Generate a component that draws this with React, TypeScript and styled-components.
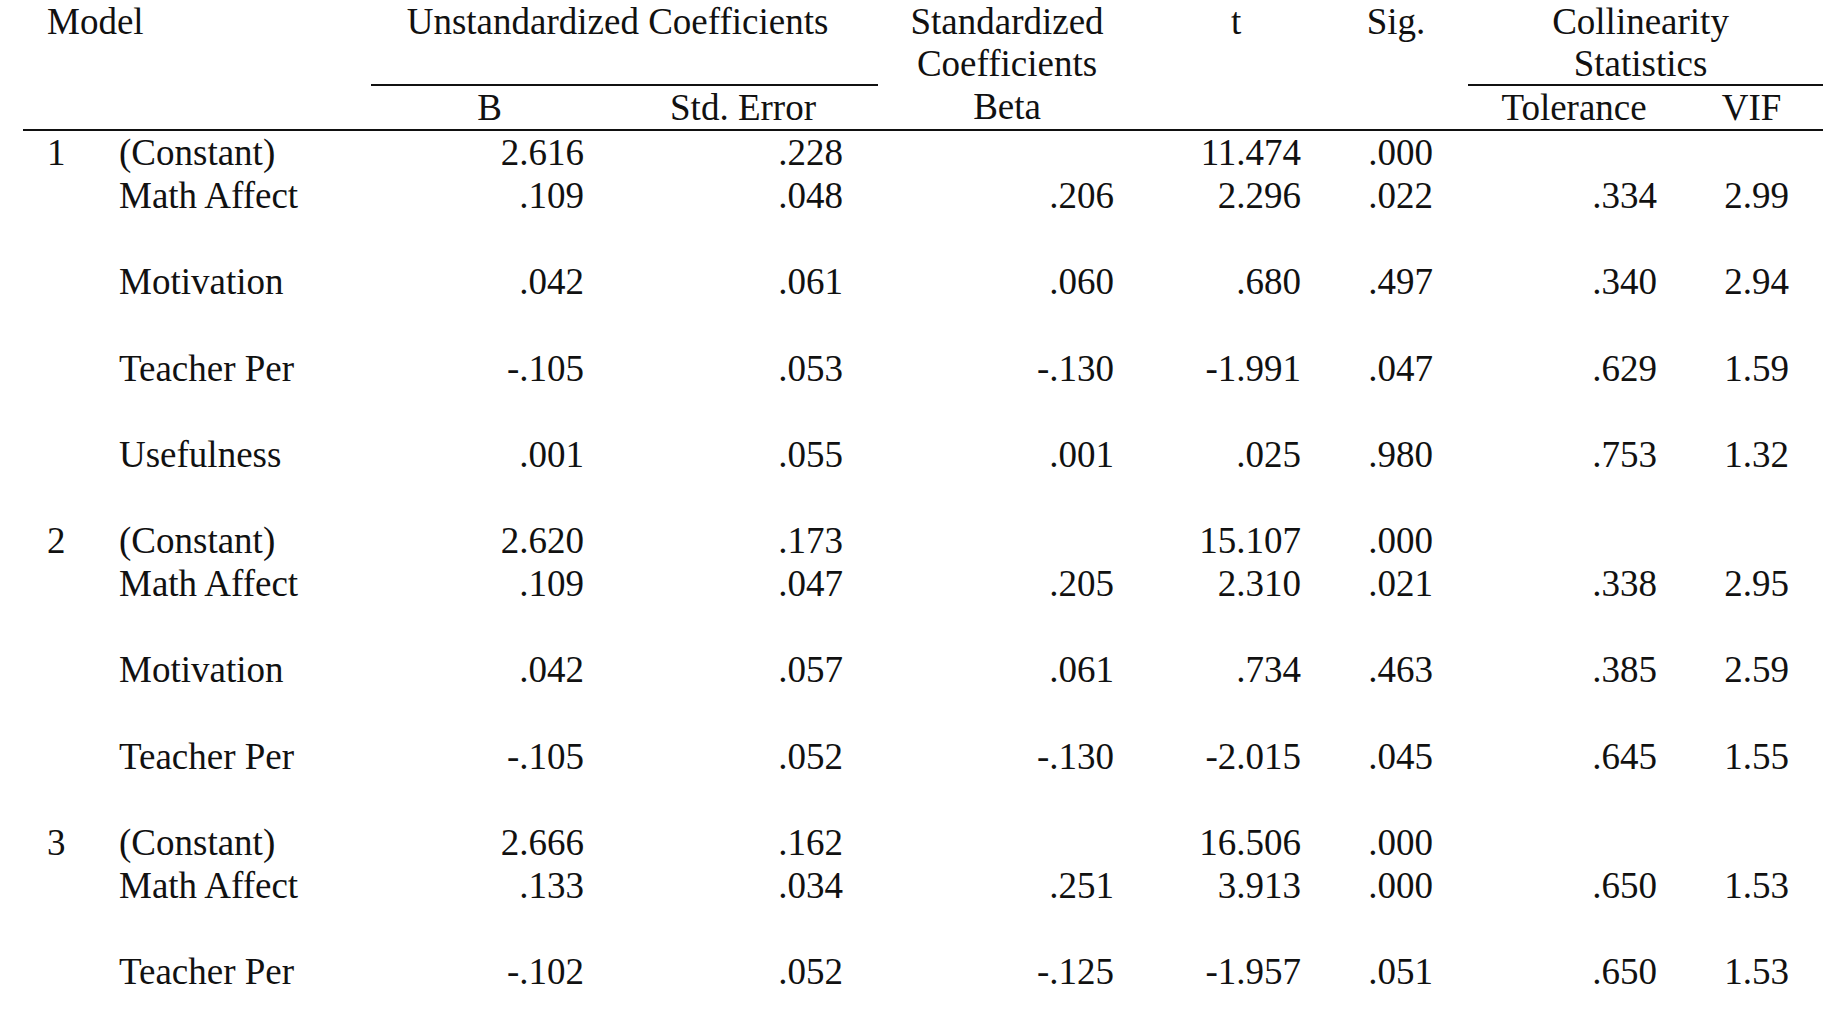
import React from "react";
import styled, { createGlobalStyle } from "styled-components";

const Global = createGlobalStyle`
  html, body { margin: 0; padding: 0; background: #ffffff; }
  body { font-family: "Liberation Serif", "Times New Roman", serif; color: #111; }
`;

const LINE = 43.1;

const Page = styled.div`
  padding: 1px 0 0 23px;
  background: #fff;
`;

const Table = styled.table`
  border-collapse: collapse;
  table-layout: fixed;
  width: 1800px;
  font-size: 37px;
  line-height: ${LINE}px;
`;

const Head = styled.thead``;

const HeadRow = styled.tr<{ $h: number; $lh: number; $rule?: boolean }>`
  height: ${(p) => p.$h}px;
  line-height: ${(p) => p.$lh}px;
  border-bottom: ${(p) => (p.$rule ? "2px solid #111" : "none")};
`;

const HeadCell = styled.th<{ $align?: "left" | "center"; $under?: boolean; $pl?: number; $shift?: number }>`
  font-weight: normal;
  padding: 0;
  padding-left: ${(p) => p.$pl ?? 0}px;
  padding-right: ${(p) => p.$shift ?? 0}px;
  text-align: ${(p) => p.$align ?? "center"};
  vertical-align: top;
  white-space: nowrap;
  border-bottom: ${(p) => (p.$under ? "2px solid #111" : "none")};
`;

const Body = styled.tbody``;

const DataRow = styled.tr<{ $lines: number }>`
  height: ${(p) => p.$lines * LINE}px;
`;

const LabelCell = styled.td<{ $pl: number }>`
  padding: 0 0 0 ${(p) => p.$pl}px;
  vertical-align: top;
  text-align: left;
  white-space: nowrap;
`;

const NumCell = styled.td<{ $pr: number }>`
  padding: 0 ${(p) => p.$pr}px 0 0;
  vertical-align: top;
  text-align: right;
  white-space: nowrap;
`;

type Col = { width: number; pr: number };
const cols: Col[] = [
  { width: 72, pr: 0 },
  { width: 276, pr: 0 },
  { width: 249, pr: 36 },
  { width: 258, pr: 35 },
  { width: 268, pr: 32 },
  { width: 184, pr: 29 },
  { width: 138, pr: 35 },
  { width: 212, pr: 23 },
  { width: 143, pr: 34 },
];

type Row = {
  model?: string;
  name: string;
  vals: string[];
  lines: number;
};

const rows: Row[] = [
  { model: "1", name: "(Constant)", vals: ["2.616", ".228", "", "11.474", ".000", "", ""], lines: 1 },
  { name: "Math Affect", vals: [".109", ".048", ".206", "2.296", ".022", ".334", "2.99"], lines: 2 },
  { name: "Motivation", vals: [".042", ".061", ".060", ".680", ".497", ".340", "2.94"], lines: 2 },
  { name: "Teacher Per", vals: ["-.105", ".053", "-.130", "-1.991", ".047", ".629", "1.59"], lines: 2 },
  { name: "Usefulness", vals: [".001", ".055", ".001", ".025", ".980", ".753", "1.32"], lines: 2 },
  { model: "2", name: "(Constant)", vals: ["2.620", ".173", "", "15.107", ".000", "", ""], lines: 1 },
  { name: "Math Affect", vals: [".109", ".047", ".205", "2.310", ".021", ".338", "2.95"], lines: 2 },
  { name: "Motivation", vals: [".042", ".057", ".061", ".734", ".463", ".385", "2.59"], lines: 2 },
  { name: "Teacher Per", vals: ["-.105", ".052", "-.130", "-2.015", ".045", ".645", "1.55"], lines: 2 },
  { model: "3", name: "(Constant)", vals: ["2.666", ".162", "", "16.506", ".000", "", ""], lines: 1 },
  { name: "Math Affect", vals: [".133", ".034", ".251", "3.913", ".000", ".650", "1.53"], lines: 2 },
  { name: "Teacher Per", vals: ["-.102", ".052", "-.125", "-1.957", ".051", ".650", "1.53"], lines: 2 },
];

export default function App() {
  return (
    <Page>
      <Global />
      <Table>
        <colgroup>
          {cols.map((c, i) => (
            <col key={i} style={{ width: c.width }} />
          ))}
        </colgroup>
        <Head>
          <HeadRow $h={83.2} $lh={41.6}>
            <HeadCell colSpan={2} $align="left" $pl={24}>Model</HeadCell>
            <HeadCell colSpan={2} $under $shift={14}>Unstandardized Coefficients</HeadCell>
            <HeadCell $shift={10}>Standardized<br />Coefficients</HeadCell>
            <HeadCell $shift={4}>t</HeadCell>
            <HeadCell $shift={6}>Sig.</HeadCell>
            <HeadCell colSpan={2} $under $shift={10}>Collinearity<br />Statistics</HeadCell>
          </HeadRow>
          <HeadRow $h={43} $lh={43} $rule>
            <HeadCell colSpan={2} />
            <HeadCell $shift={12}>B</HeadCell>
            <HeadCell $shift={12}>Std. Error</HeadCell>
            <HeadCell $shift={10}>Beta</HeadCell>
            <HeadCell />
            <HeadCell />
            <HeadCell $shift={0}>Tolerance</HeadCell>
            <HeadCell $shift={0}>VIF</HeadCell>
          </HeadRow>
        </Head>
        <Body>
          {rows.map((r, i) => (
            <DataRow key={i} $lines={r.lines}>
              <LabelCell $pl={24}>{r.model ?? ""}</LabelCell>
              <LabelCell $pl={24}>{r.name}</LabelCell>
              {r.vals.map((v, j) => (
                <NumCell key={j} $pr={cols[j + 2].pr}>{v}</NumCell>
              ))}
            </DataRow>
          ))}
        </Body>
      </Table>
    </Page>
  );
}
